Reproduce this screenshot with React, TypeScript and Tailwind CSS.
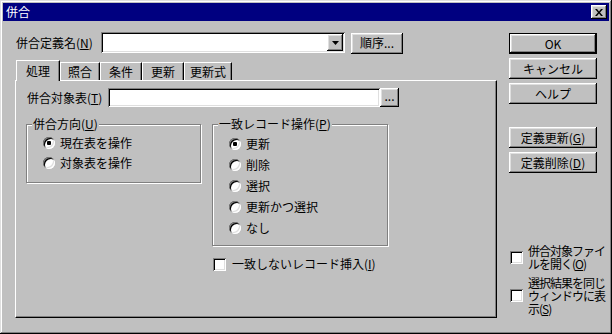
import type { ReactNode } from 'react';

const raised =
  'shadow-[inset_-1px_-1px_0_#000,inset_1px_1px_0_#fff,inset_-2px_-2px_0_#808080,inset_2px_2px_0_#dfdfdf]';
const sunken =
  'shadow-[inset_1px_1px_0_#808080,inset_-1px_-1px_0_#fff,inset_2px_2px_0_#000,inset_-2px_-2px_0_#dfdfdf]';

const Btn = ({ children, className = '' }: { children: ReactNode; className?: string }) => (
  <div className={`flex items-center justify-center bg-[#c0c0c0] ${raised} ${className}`}>{children}</div>
);

const Radio = ({ checked }: { checked?: boolean }) => (
  <span className="relative w-3 h-3 shrink-0 rounded-full bg-white shadow-[inset_1px_1px_0_#808080,inset_-1px_-1px_0_#fff,inset_2px_2px_0_#000,inset_-2px_-2px_0_#dfdfdf] flex items-center justify-center">
    {checked && <span className="w-1 h-1 rounded-[1px] bg-black" />}
  </span>
);

const Check = () => <span className={`w-[13px] h-[13px] shrink-0 bg-white ${sunken}`} />;

const Group = ({ title, className, children }: { title: ReactNode; className: string; children: ReactNode }) => (
  <div className={`relative border border-[#808080] shadow-[1px_1px_0_#fff,inset_1px_1px_0_#fff] ${className}`}>
    <span className="absolute -top-[8px] left-[5px] px-[1px] bg-[#c0c0c0] leading-[14px]">{title}</span>
    {children}
  </div>
);

const Tab = ({ label, w, active }: { label: string; w: string; active?: boolean }) => (
  <div
    className={`flex items-center justify-center border-l border-t border-white border-r border-r-black shadow-[inset_-1px_0_0_#808080] bg-[#c0c0c0] ${w} ${
      active ? 'h-[21px] -mb-px relative z-10' : 'h-[18px]'
    }`}
  >
    {label}
  </div>
);

// multi-line label next to a checkbox, one block per line
const Lines = ({ lines }: { lines: ReactNode[] }) => (
  <div className="flex flex-col tracking-[-1px] whitespace-nowrap">
    {lines.map((l, i) => (
      <div key={i} className="h-[13px] leading-[13px]">
        {l}
      </div>
    ))}
  </div>
);

export default function App() {
  return (
    <div className="w-[612px] h-[334px] bg-[#c0c0c0] p-[3px] text-[12px] leading-[14px] text-black font-['Noto_Sans_CJK_JP',sans-serif] shadow-[inset_-1px_-1px_0_#000,inset_1px_1px_0_#dfdfdf,inset_-2px_-2px_0_#808080,inset_2px_2px_0_#fff]">
      {/* title bar */}
      <div className="h-[18px] bg-[#000080] flex items-center justify-between pl-[3px] pr-[2px]">
        <span className="text-white">併合</span>
        <Btn className="w-4 h-[14px]">
          <svg width="8" height="7" viewBox="0 0 8 7">
            <path d="M0 0h2l2 2.5 2-2.5h2L5 3.5 8 7H6L4 4.5 2 7H0l3-3.5z" fill="#000" />
          </svg>
        </Btn>
      </div>

      <div className="flex">
        {/* left side */}
        <div className="ml-[12px] w-[482px]">
          <div className="flex items-center mt-[11px] h-[21px]">
            <span className="w-[86px] pl-[1px]">
              併合定義名(<u>N</u>)
            </span>
            <div className={`w-[244px] h-[21px] bg-white flex justify-end items-center pr-[2px] ${sunken}`}>
              <Btn className="w-4 h-[17px]">
                <svg width="7" height="4" viewBox="0 0 7 4">
                  <path d="M0 0h7L3.5 4z" fill="#000" />
                </svg>
              </Btn>
            </div>
            <Btn className="ml-[6px] w-[52px] h-[21px] mt-[1px]">順序...</Btn>
          </div>

          <div className="flex items-end h-[20px] mt-[7px] ml-[1px]">
            <Tab label="処理" w="w-[44px]" active />
            <Tab label="照合" w="w-[40px]" />
            <Tab label="条件" w="w-[42px]" />
            <Tab label="更新" w="w-[42px]" />
            <Tab label="更新式" w="w-[48px]" />
          </div>

          <div className="h-[238px] border border-white border-r-black border-b-black shadow-[inset_-1px_-1px_0_#808080] pt-[7px] pl-[10px]">
            <div className="flex items-center h-[19px]">
              <span className="w-[82px] pl-[1px]">
                併合対象表(<u>T</u>)
              </span>
              <div className={`w-[272px] h-[19px] bg-white ${sunken}`} />
              <Btn className="w-[19px] h-[19px] pb-[4px]">...</Btn>
            </div>

            <div className="flex items-start gap-[11px] mt-[17px]">
              <Group
                title={
                  <>
                    併合方向(<u>U</u>)
                  </>
                }
                className="w-[175px] h-[59px] pt-[8px] pl-[16px]"
              >
                {['現在表を操作', '対象表を操作'].map((t, i) => (
                  <div key={t} className="flex items-center gap-[5px] h-[20px]">
                    <Radio checked={i === 0} />
                    <span>{t}</span>
                  </div>
                ))}
              </Group>

              <div className="w-[176px]">
                <Group
                  title={
                    <>
                      一致レコード操作(<u>P</u>)
                    </>
                  }
                  className="w-[176px] h-[122px] pt-[8px] pl-[16px]"
                >
                  {['更新', '削除', '選択', '更新かつ選択', 'なし'].map((t, i) => (
                    <div key={t} className="flex items-center gap-[5px] h-[21px]">
                      <Radio checked={i === 0} />
                      <span>{t}</span>
                    </div>
                  ))}
                </Group>
                <div className="flex items-center gap-[6px] mt-[11px] ml-[1px]">
                  <Check />
                  <span>
                    一致しないレコード挿入(<u>I</u>)
                  </span>
                </div>
              </div>
            </div>
          </div>
        </div>

        {/* right side */}
        <div className="ml-[12px] w-[100px] flex flex-col">
          <div className="mt-[12px] w-[88px] h-[21px] border border-black">
            <Btn className="w-full h-full">OK</Btn>
          </div>
          <Btn className="mt-[4px] w-[88px] h-[21px]">キャンセル</Btn>
          <Btn className="mt-[4px] w-[88px] h-[21px]">ヘルプ</Btn>
          <Btn className="mt-[23px] w-[88px] h-[21px]">
            定義更新(<u>G</u>)
          </Btn>
          <Btn className="mt-[4px] w-[88px] h-[21px]">
            定義削除(<u>D</u>)
          </Btn>

          <div className="flex items-center mt-[71px] ml-[1px] gap-[5px]">
            <Check />
            <Lines
              lines={[
                '併合対象ファイ',
                <>
                  ルを開く(<u>O</u>)
                </>,
              ]}
            />
          </div>
          <div className="flex items-center mt-[6px] ml-[1px] gap-[5px]">
            <Check />
            <Lines
              lines={[
                '選択結果を同じ',
                'ウィンドウに表',
                <>
                  示(<u>S</u>)
                </>,
              ]}
            />
          </div>
        </div>
      </div>
    </div>
  );
}
